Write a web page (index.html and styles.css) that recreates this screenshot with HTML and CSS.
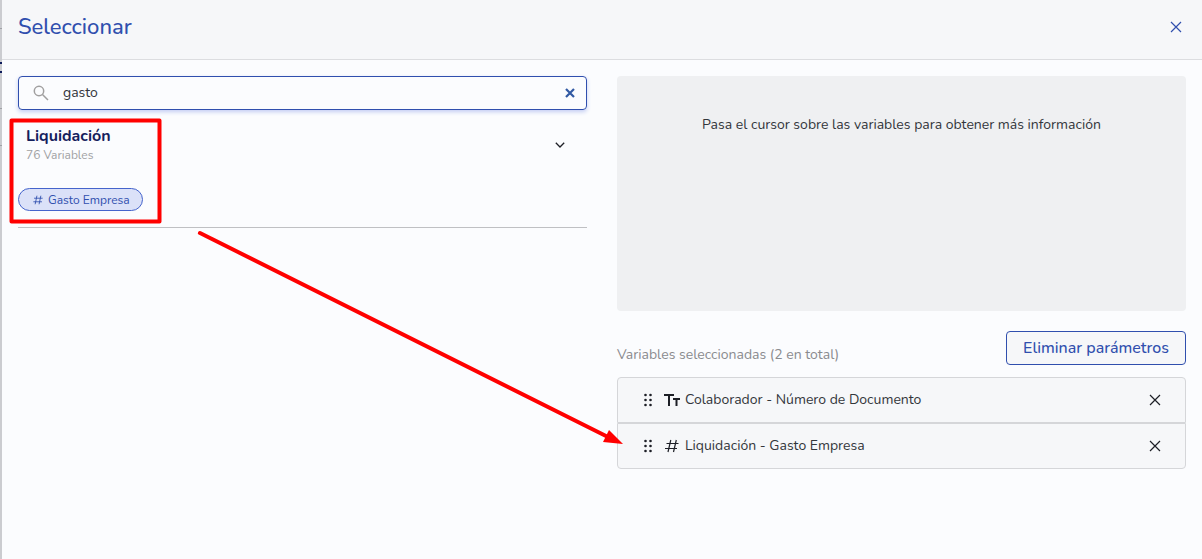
FILE: index.html
```html
<!DOCTYPE html>
<html lang="es">
<head>
<meta charset="utf-8">
<meta name="viewport" content="width=device-width, initial-scale=1">
<title>Seleccionar</title>
<link rel="stylesheet" href="styles.css">
</head>
<body>
<div class="page">
  <div class="backdrop" aria-hidden="true">
    <svg width="2" height="559" viewBox="0 0 2 559"><path d="M0 28.500h2M0 108.500h2M0 145.500h2" stroke="#a0a1a6"/><path d="M0 63h2M0 72h2" stroke="#0d1b5c" stroke-width="2"/></svg>
  </div>
  <main class="dialog">
    <header class="header">
      <h1 class="title">Seleccionar</h1>
      <button class="icon-button close" type="button" aria-label="Cerrar">
        <svg width="12" height="12" viewBox="0 0 12 12"><path d="M1 1l10 10M11 1L1 11" stroke="currentColor" stroke-width="1.200" fill="none"/></svg>
      </button>
    </header>
    <div class="content">
      <section class="column">
        <div class="search">
          <svg width="16" height="16" viewBox="0 0 16 16" fill="none" stroke="#a09f9f" stroke-width="1.500"><circle cx="6" cy="6" r="4.700"/><path d="M9.500 9.500L15 15"/></svg>
          <input class="search-input" type="text" value="gasto" aria-label="Buscar variables">
          <button class="icon-button clear" type="button" aria-label="Borrar">
            <svg width="10" height="10" viewBox="0 0 10 10"><path d="M1 1l8 8M9 1L1 9" stroke="currentColor" stroke-width="2.200" fill="none"/></svg>
          </button>
        </div>
        <div class="group">
          <div class="group-head">
            <div>
              <h2 class="group-title">Liquidación</h2>
              <p class="group-count">76 Variables</p>
            </div>
            <button class="icon-button chevron" type="button" aria-label="Contraer">
              <svg width="10" height="6" viewBox="0 0 10 6"><path d="M.8.800L5 5 9.200.800" stroke="currentColor" stroke-width="1.300" fill="none"/></svg>
            </button>
          </div>
          <button class="chip" type="button">
            <svg width="10" height="10" viewBox="0 0 14 14" fill="none" stroke="currentColor" stroke-width="1.200"><path d="M5.500 1L3 13M11 1L8.500 13M1.500 4.500H13.500M.5 9.500H12.500"/></svg>
            <span>Gasto Empresa</span>
          </button>
        </div>
      </section>
      <section class="column">
        <div class="info">Pasa el cursor sobre las variables para obtener más información</div>
        <div class="toolbar">
          <p class="summary">Variables seleccionadas (2 en total)</p>
          <button class="remove-all" type="button">Eliminar parámetros</button>
        </div>
        <ul class="list">
          <li class="item">
            <svg class="grip" width="8" height="14" viewBox="0 0 8 14" fill="#1d1f26"><circle cx="1.500" cy="2" r="1.300"/><circle cx="6.500" cy="2" r="1.300"/><circle cx="1.500" cy="7" r="1.300"/><circle cx="6.500" cy="7" r="1.300"/><circle cx="1.500" cy="12" r="1.300"/><circle cx="6.500" cy="12" r="1.300"/></svg>
            <svg width="16" height="14" viewBox="0 0 16 14" fill="none" stroke="#1d1f26" stroke-width="2"><path d="M0 2h10M5 2v11M9 6h7M12.500 6v7"/></svg>
            <span class="item-name">Colaborador - Número de Documento</span>
            <button class="icon-button" type="button" aria-label="Quitar Número de Documento">
              <svg width="12" height="12" viewBox="0 0 12 12"><path d="M1 1l10 10M11 1L1 11" stroke="currentColor" stroke-width="1.200" fill="none"/></svg>
            </button>
          </li>
          <li class="item">
            <svg class="grip" width="8" height="14" viewBox="0 0 8 14" fill="#1d1f26"><circle cx="1.500" cy="2" r="1.300"/><circle cx="6.500" cy="2" r="1.300"/><circle cx="1.500" cy="7" r="1.300"/><circle cx="6.500" cy="7" r="1.300"/><circle cx="1.500" cy="12" r="1.300"/><circle cx="6.500" cy="12" r="1.300"/></svg>
            <svg width="16" height="14" viewBox="0 0 16 14" fill="none" stroke="#1d1f26" stroke-width="1.200"><path d="M6.800 1L4 13M12.300 1L9.500 13M2.500 4.500H14.500M1 9.500H13"/></svg>
            <span class="item-name">Liquidación - Gasto Empresa</span>
            <button class="icon-button" type="button" aria-label="Quitar Gasto Empresa">
              <svg width="12" height="12" viewBox="0 0 12 12"><path d="M1 1l10 10M11 1L1 11" stroke="currentColor" stroke-width="1.200" fill="none"/></svg>
            </button>
          </li>
        </ul>
      </section>
    </div>
  </main>
  <svg class="annotation" width="640" height="460" viewBox="0 0 640 460" aria-hidden="true">
    <rect x="11.500" y="120.500" width="148" height="101" fill="none" stroke="#f00" stroke-width="4" stroke-linejoin="round"/>
    <path d="M200 233L608 437" stroke="#f00" stroke-width="4" stroke-linecap="round"/>
    <path d="M623 444L603 442L609 430Z" fill="#f00"/>
  </svg>
</div>
</body>
</html>
```
FILE: styles.css
```css
* {
  box-sizing: border-box;
}

body {
  margin: 0;
  font-family: Nunito, "Open Sans", sans-serif;
  font-size: 14px;
  line-height: 20px;
  color: #33363b;
  background: #fbfcfe;
}

h1, h2, p, ul {
  margin: 0;
  padding: 0;
}

button, input {
  font: inherit;
  color: inherit;
}

button {
  cursor: pointer;
}

.page {
  position: relative;
  display: flex;
  min-height: 100vh;
}

.backdrop {
  width: 2px;
  flex: none;
  background: #cbccd0;
}

.dialog {
  flex: 1;
  min-width: 0;
}

.header {
  display: flex;
  align-items: center;
  justify-content: space-between;
  height: 60px;
  padding: 0 16px 6px;
  background: #f6f7f9;
  border-bottom: 1px solid #dcdde0;
}

.title {
  font-size: 22px;
  font-weight: 500;
  line-height: 30px;
  color: #304fae;
}

.icon-button {
  display: flex;
  align-items: center;
  justify-content: center;
  width: 20px;
  height: 20px;
  padding: 0;
  border: 0;
  background: none;
  color: #1d1f26;
}

.close {
  color: #304fae;
}

.content {
  display: grid;
  grid-template-columns: 1fr 1fr;
  gap: 30px;
  padding: 16px;
}

.column {
  min-width: 0;
}

.search {
  display: flex;
  align-items: center;
  gap: 14px;
  height: 34px;
  padding: 0 6px 0 14px;
  border: 1px solid #304fae;
  border-radius: 4px;
  box-shadow: 0 2px 4px #c3cdf3;
}

.search-input {
  flex: 1;
  min-width: 0;
  padding: 0;
  border: 0;
  outline: 0;
  background: none;
}

.clear {
  color: #3159a3;
}

.group {
  padding: 16px 0;
  border-bottom: 1px solid #bfc0c3;
}

.group-head {
  display: flex;
  align-items: center;
  justify-content: space-between;
  padding: 0 17px 24px 8px;
}

.group-title {
  font-size: 16px;
  font-weight: 700;
  line-height: 20px;
  color: #14205c;
}

.group-count {
  font-size: 12px;
  line-height: 18px;
  color: #a0a1a3;
}

.chip {
  display: flex;
  align-items: center;
  gap: 5px;
  height: 23px;
  padding: 0 12px 0 14px;
  border: 1px solid #4564cc;
  border-radius: 12px;
  background: #dbe1f8;
  color: #304fae;
  font-size: 12px;
  line-height: 20px;
}

.info {
  min-height: 235px;
  padding: 39px 16px;
  border-radius: 4px;
  background: #eff0f2;
  text-align: center;
}

.toolbar {
  display: flex;
  align-items: center;
  justify-content: space-between;
  padding: 20px 0 12px;
}

.summary {
  padding-top: 14px;
  color: #8a8b8e;
}

.remove-all {
  height: 34px;
  padding: 0 16px;
  border: 1px solid #304fae;
  border-radius: 4px;
  background: #f6f7f9;
  color: #304fae;
  font-size: 16px;
  font-weight: 500;
}

.list {
  list-style: none;
}

.item {
  display: flex;
  align-items: center;
  height: 46px;
  padding: 0 20px 0 26px;
  border: 1px solid #d5d6d9;
  background: #f6f7f9;
}

.item:first-child {
  border-radius: 4px 4px 0 0;
}

.item:last-child {
  border-radius: 0 0 4px 4px;
}

.grip {
  margin-right: 12px;
}

.item-name {
  flex: 1;
  margin-left: 5px;
}

.annotation {
  position: absolute;
  top: 0;
  left: 0;
  pointer-events: none;
}
```
